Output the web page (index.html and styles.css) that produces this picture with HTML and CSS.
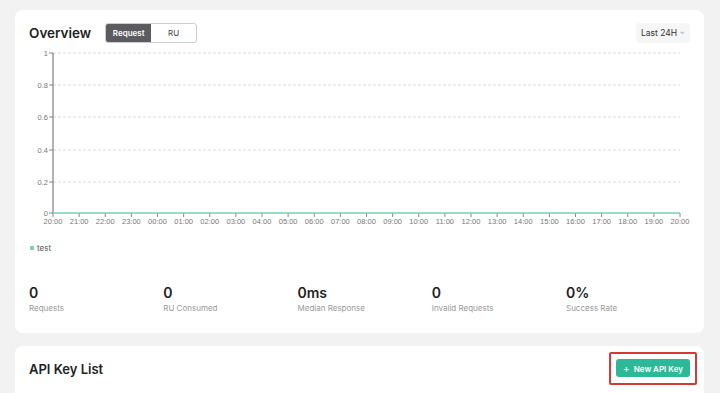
FILE: index.html
```html
<!DOCTYPE html>
<html lang="en">
<head>
    <meta charset="UTF-8">
    <title>Overview</title>
    <link rel="stylesheet" href="styles.css">
</head>
<body>
    <div class="page">
        <section class="card overview">
            <div class="card-head">
                <h2 class="title">Overview</h2>
                <div class="toggle">
                    <span class="seg active">Request</span>
                    <span class="seg">RU</span>
                </div>
                <button class="range">Last 24H <span class="chev">&#8964;</span></button>
            </div>

            <svg class="chart" width="661" height="182" viewBox="0 0 661 182">
                <g class="grid">
                    <line x1="24" y1="5" x2="651" y2="5"/>
                    <line x1="24" y1="37" x2="651" y2="37"/>
                    <line x1="24" y1="69" x2="651" y2="69"/>
                    <line x1="24" y1="102" x2="651" y2="102"/>
                    <line x1="24" y1="134" x2="651" y2="134"/>
                </g>
                <g class="yticks">
                    <line x1="20" y1="5" x2="24" y2="5"/>
                    <line x1="20" y1="37" x2="24" y2="37"/>
                    <line x1="20" y1="69" x2="24" y2="69"/>
                    <line x1="20" y1="102" x2="24" y2="102"/>
                    <line x1="20" y1="134" x2="24" y2="134"/>
                    <line x1="20" y1="165" x2="24" y2="165"/>
                </g>
                <g class="ylabels">
                    <text x="19" y="8">1</text>
                    <text x="19" y="40">0.8</text>
                    <text x="19" y="72">0.6</text>
                    <text x="19" y="105">0.4</text>
                    <text x="19" y="137">0.2</text>
                    <text x="19" y="168">0</text>
                </g>
                <line class="yaxis" x1="24" y1="5" x2="24" y2="165"/>
                <g id="xticks" class="xticks"></g>
                <g id="xlabels" class="xlabels"></g>
                <line class="series" x1="24" y1="165" x2="651" y2="165"/>
            </svg>

            <div class="legend"><span class="dot"></span>test</div>

            <div class="stats">
                <div class="stat"><div class="value">0</div><div class="label">Requests</div></div>
                <div class="stat"><div class="value">0</div><div class="label">RU Consumed</div></div>
                <div class="stat"><div class="value">0ms</div><div class="label">Median Response</div></div>
                <div class="stat"><div class="value">0</div><div class="label">Invalid Requests</div></div>
                <div class="stat"><div class="value">0%</div><div class="label">Success Rate</div></div>
            </div>
        </section>

        <section class="card keys">
            <h2 class="title small">API Key List</h2>
            <div class="highlight">
                <button class="new-key"><span class="plus">+</span> New API Key</button>
            </div>
        </section>
    </div>

    <script>
        // x axis: 25 hourly ticks from 20:00 to 20:00
        var ns = "http://www.w3.org/2000/svg";
        var ticks = document.getElementById("xticks");
        var labels = document.getElementById("xlabels");
        for (var i = 0; i <= 24; i++) {
            var x = 24 + i * 26.125;
            var h = (20 + i) % 24;
            var t = document.createElementNS(ns, "line");
            t.setAttribute("x1", x); t.setAttribute("x2", x);
            t.setAttribute("y1", 165); t.setAttribute("y2", 169);
            ticks.appendChild(t);
            var l = document.createElementNS(ns, "text");
            l.setAttribute("x", x); l.setAttribute("y", 176);
            l.textContent = (h < 10 ? "0" : "") + h + ":00";
            labels.appendChild(l);
        }
    </script>
</body>
</html>
```

FILE: styles.css
```css
body {
    margin: 0;
    background: #f2f2f2;
    font-family: "Inter", "Noto Sans", sans-serif;
    color: #222;
}
.page {
    padding: 10px 16px 0 15px;
    display: flex;
    flex-direction: column;
    gap: 13px;
}
.card {
    background: #fff;
    border-radius: 8px;
    padding: 13px 14px 0 14px;
}
.overview {
    height: 310px;
}
.card-head {
    display: flex;
    align-items: center;
    height: 20px;
}
.title {
    margin: 0;
    font-size: 13.5px;
    font-weight: 600;
}
.title.small {
    font-size: 13px;
}
.toggle {
    display: flex;
    margin-left: 14px;
    height: 20px;
    border: 1px solid #ccc;
    border-radius: 3px;
    box-sizing: border-box;
    overflow: hidden;
}
.seg {
    font-size: 8px;
    line-height: 18px;
    text-align: center;
    color: #444;
    width: 45px;
}
.seg.active {
    background: #5b5b60;
    color: #fff;
    font-weight: 600;
}
.range {
    margin-left: auto;
    height: 20px;
    width: 54px;
    padding: 0;
    border: none;
    border-radius: 4px;
    background: #f6f6f6;
    font-family: inherit;
    font-size: 8.5px;
    color: #333;
}
.chev {
    font-size: 7px;
    color: #999;
    position: relative;
    top: -2px;
}
.chart {
    display: block;
    margin-top: 5px;
}
.grid line {
    stroke: #dcdcdc;
    stroke-width: 1;
    stroke-dasharray: 3 2;
}
.yticks line, .xticks line {
    stroke: #888;
    stroke-width: 1;
}
.yaxis {
    stroke: #666;
    stroke-width: 1;
}
.series {
    stroke: #72d1b8;
    stroke-width: 1.5;
}
.ylabels text {
    font-family: "Liberation Sans", sans-serif;
    font-size: 7.5px;
    fill: #777;
    text-anchor: end;
}
.xlabels text {
    font-family: "Liberation Sans", sans-serif;
    font-size: 7.5px;
    fill: #777;
    text-anchor: middle;
}
.legend {
    margin-top: 13px;
    font-size: 8px;
    color: #555;
    display: flex;
    align-items: center;
    gap: 3px;
    padding-left: 1px;
}
.dot {
    width: 4px;
    height: 4px;
    border-radius: 1px;
    background: #72d1b8;
}
.stats {
    display: flex;
    margin-top: 32px;
}
.stat {
    flex: 0 0 134.25px;
}
.value {
    font-size: 14px;
    font-weight: 600;
    line-height: 16px;
}
.label {
    font-size: 8px;
    color: #999;
    margin-top: 2px;
}
.keys {
    display: flex;
    align-items: center;
    justify-content: space-between;
    height: 45px;
    padding-top: 0;
    padding-right: 7px;
    padding-bottom: 2px;
    border-radius: 8px 8px 0 0;
}
.highlight {
    border: 2px solid #d33a35;
    border-radius: 2px;
    padding: 5px 5px 6px;
}
.new-key {
    display: block;
    height: 18px;
    width: 74px;
    padding: 0;
    border: none;
    border-radius: 3px;
    background: #2db898;
    color: #fff;
    font-family: inherit;
    font-size: 8px;
    font-weight: 600;
}
.plus {
    font-weight: 400;
    font-size: 10px;
    margin-right: 2px;
}
```
